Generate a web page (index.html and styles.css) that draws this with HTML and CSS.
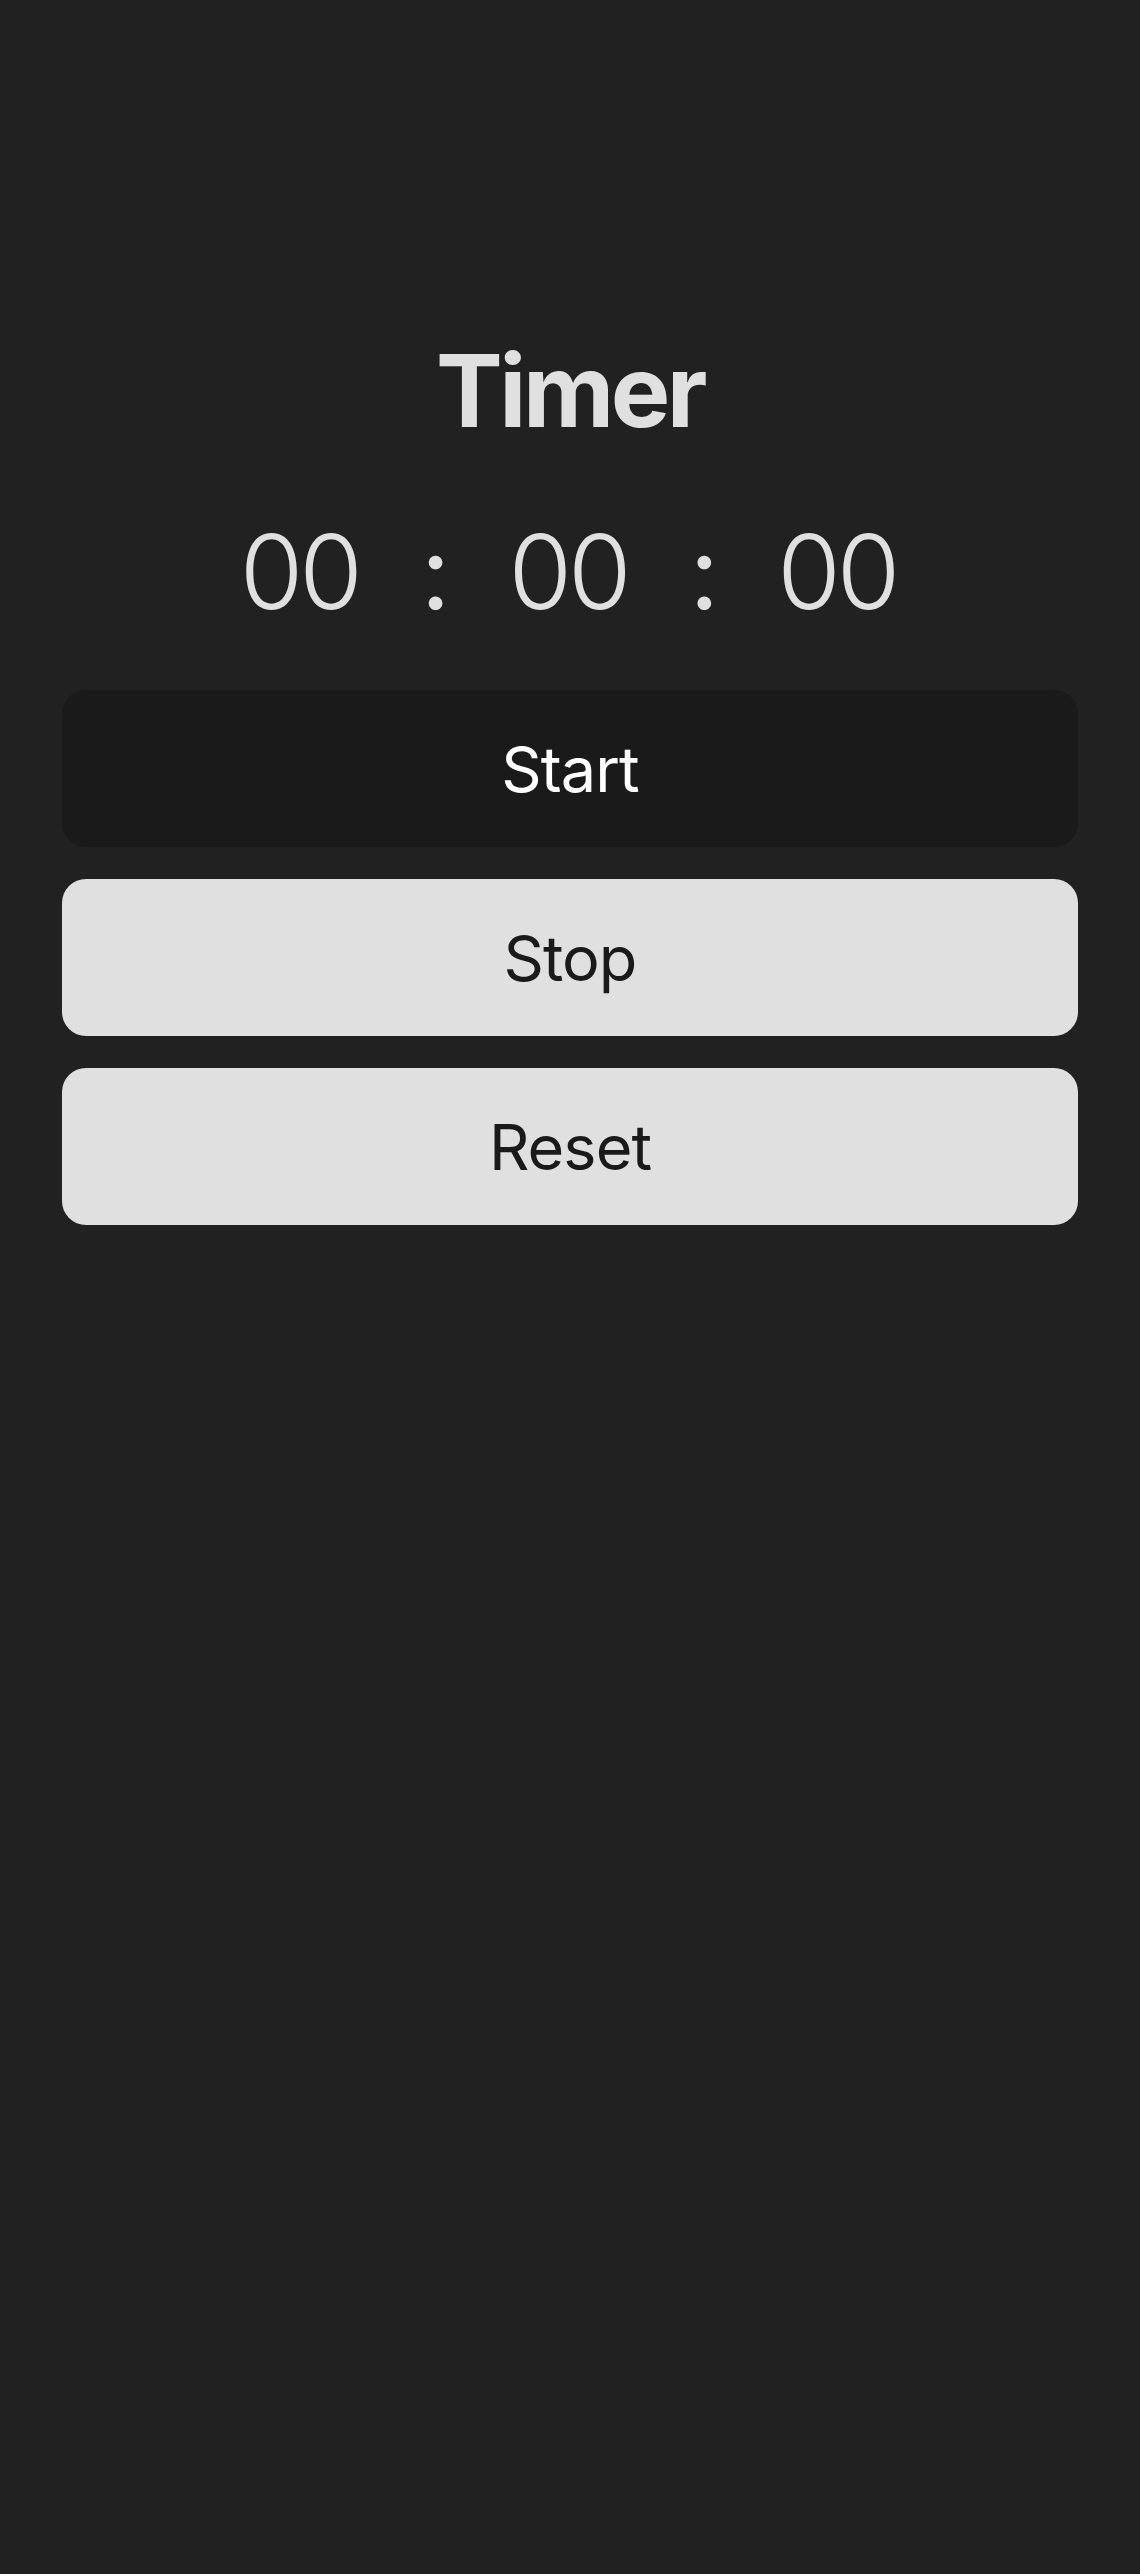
FILE: index.html
```html
<!DOCTYPE html>
<html lang="en">
<head>
<meta charset="utf-8">
<title>Timer</title>
<link rel="stylesheet" href="styles.css">
</head>
<body>
<main class="timer">
  <h1 class="timer-title">Timer</h1>
  <div class="timer-display">
    <span class="timer-unit">00</span>
    <span class="timer-sep">:</span>
    <span class="timer-unit">00</span>
    <span class="timer-sep">:</span>
    <span class="timer-unit">00</span>
  </div>
  <div class="timer-actions">
    <button class="btn btn-dark" type="button">Start</button>
    <button class="btn btn-light" type="button">Stop</button>
    <button class="btn btn-light" type="button">Reset</button>
  </div>
</main>
</body>
</html>
```
FILE: styles.css
```css
* { box-sizing: border-box; }
html, body {
  margin: 0;
  background: #212121;
  min-height: 100%;
}
body {
  font-family: Inter, "Noto Sans", sans-serif;
  color: #e0e0e0;
}
.timer {
  padding: 331px 62px 0;
  display: flex;
  flex-direction: column;
}
.timer-title {
  margin: 0;
  text-align: center;
  font-size: 100px;
  line-height: 120px;
  font-weight: 700;
  letter-spacing: -0.035em;
  color: #e0e0e0;
}
.timer-display {
  margin-top: 58px;
  display: flex;
  justify-content: center;
  align-items: baseline;
  gap: 58px;
  font-size: 103px;
  line-height: 125px;
  font-weight: 300;
  color: #e0e0e0;
}
.timer-unit {
  letter-spacing: -0.04em;
  margin-right: 0.04em;
}
.timer-sep {
  font-weight: 400;
}
.timer-actions {
  margin-top: 56px;
  display: flex;
  flex-direction: column;
  gap: 32px;
}
.btn {
  height: 157px;
  border: none;
  border-radius: 24px;
  font-family: Inter, "Noto Sans", sans-serif;
  font-size: 63px;
  font-weight: 400;
  letter-spacing: -0.015em;
  cursor: pointer;
}
.btn-dark {
  background: #1a1a1a;
  color: #ffffff;
}
.btn-light {
  background: #e0e0e0;
  color: #1a1a1a;
}
```
